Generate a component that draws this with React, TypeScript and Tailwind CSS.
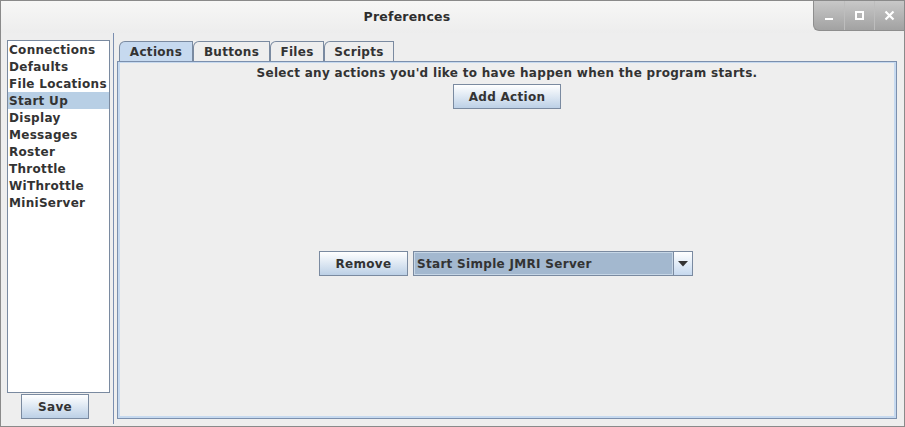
import React from 'react';

const font = { fontFamily: '"DejaVu Sans", Verdana, sans-serif' };

function MetalButton({ label, className }: { label: string; className: string }) {
  return (
    <div
      className={`flex items-center justify-center border border-[#7a8aa0] bg-gradient-to-b from-white to-[#bcd0e6] text-[12px] font-bold tracking-[0.3px] text-[#333333] ${className}`}
    >
      {label}
    </div>
  );
}

function Tab({ label, selected, className }: { label: string; selected?: boolean; className: string }) {
  return (
    <div
      className={`flex h-[20px] items-center justify-center rounded-tl-[6px] border border-b-0 border-[#7a8aa0] text-[12px] font-bold tracking-[0.3px] text-[#333333] ${
        selected ? 'bg-[#c6d9ef]' : 'bg-[#eeeeee]'
      } ${className}`}
    >
      {label}
    </div>
  );
}

export default function App() {
  const items = [
    'Connections',
    'Defaults',
    'File Locations',
    'Start Up',
    'Display',
    'Messages',
    'Roster',
    'Throttle',
    'WiThrottle',
    'MiniServer',
  ];

  return (
    <div
      className="relative flex h-[427px] w-[905px] flex-col overflow-hidden border border-[#8a8a8a] bg-[#eeeeee]"
      style={font}
    >
      {/* title bar */}
      <div className="flex h-[32px] shrink-0 bg-gradient-to-b from-[#f7f7f6] to-[#ededed]">
        <div className="flex flex-1 items-center justify-center pt-[1px] text-[12.5px] font-bold tracking-[0.2px] text-[#2e2e2e]">
          Preferences
        </div>
        <div className="w-[91px]" />
      </div>
      <div className="absolute right-0 top-0 flex h-[30px] w-[91px] rounded-bl-[6px] border-b border-l border-[#8e8e8e] bg-gradient-to-b from-[#c8c8c8] to-[#a2a2a2]">
        <div className="flex w-[30px] items-end justify-center pb-[10px]">
          <div className="h-[2px] w-[8px] bg-white" />
        </div>
        <div className="flex w-[30px] items-center justify-center border-l border-[#bdbdbd]">
          <div className="h-[9px] w-[9px] border-2 border-white" />
        </div>
        <div className="flex w-[30px] items-center justify-center border-l border-[#bdbdbd]">
          <svg width="11" height="11" viewBox="0 0 11 11">
            <path d="M1.5 1.5 L9.5 9.5 M9.5 1.5 L1.5 9.5" stroke="white" strokeWidth="2.2" />
          </svg>
        </div>
      </div>

      {/* body */}
      <div className="flex flex-1">
        {/* left column */}
        <div className="flex w-[112px] flex-col items-start pl-[6px] pt-[7px]">
          <div className="flex h-[353px] w-[103px] flex-col border border-[#7a8aa0] bg-white">
            {items.map((it) => (
              <div
                key={it}
                className={`flex h-[17px] items-center pl-[1px] text-[12px] font-bold tracking-[0.3px] text-[#333333] ${
                  it === 'Start Up' ? 'bg-[#b8cfe5]' : ''
                }`}
              >
                {it}
              </div>
            ))}
          </div>
          <MetalButton label="Save" className="ml-[14px] mt-[1px] h-[25px] w-[68px]" />
        </div>

        {/* divider */}
        <div className="mb-[2px] w-[1px] bg-[#7a8eb0]" />

        {/* tabbed pane */}
        <div className="flex flex-1 flex-col pl-[3px] pr-[7px] pt-[8px] pb-[7px]">
          <div className="flex pl-[2px]">
            <Tab label="Actions" selected className="w-[74px]" />
            <Tab label="Buttons" className="w-[77px]" />
            <Tab label="Files" className="w-[54px]" />
            <Tab label="Scripts" className="w-[70px]" />
          </div>
          <div className="flex flex-1 flex-col border border-[#7b8fad] bg-[#eeeeee]">
            <div className="flex flex-1 flex-col border-2 border-t border-[#c6d9ef] bg-[#eeeeee]">
              <div className="flex h-[21px] items-center justify-center pb-[1px] text-[12px] font-bold tracking-[0.3px] text-[#333333]">
                Select any actions you'd like to have happen when the program starts.
              </div>
              <div className="flex justify-center">
                <MetalButton label="Add Action" className="h-[25px] w-[108px]" />
              </div>
              <div className="flex flex-1 items-center justify-center gap-[5px] pt-[2px] pr-[2px]">
                <MetalButton label="Remove" className="h-[25px] w-[89px]" />
                <div className="flex h-[25px] w-[280px] border border-[#7a8aa0] bg-[#eeeeee]">
                  <div className="flex flex-1 items-center border border-[#c6d6e6] bg-[#a3b8cf] pl-[2px] text-[12px] font-bold tracking-[0.3px] text-[#333333]">
                    Start Simple JMRI Server
                  </div>
                  <div className="flex w-[19px] items-center justify-center border-l border-[#7a8aa0] bg-gradient-to-b from-white to-[#c6d9ef]">
                    <svg width="10" height="6" viewBox="0 0 10 6">
                      <path d="M0 0 H10 L5 5.5 Z" fill="#333333" />
                    </svg>
                  </div>
                </div>
              </div>
            </div>
          </div>
        </div>
      </div>
    </div>
  );
}
